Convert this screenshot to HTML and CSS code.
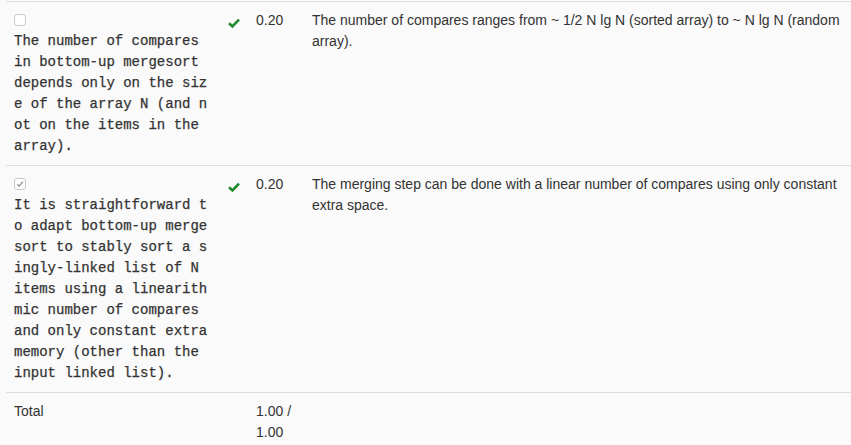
FILE: index.html
```html
<!DOCTYPE html>
<html>
<head>
<meta charset="utf-8">
<link rel="stylesheet" href="styles.css">
</head>
<body>
<div class="wrap">
<table class="grades">
  <colgroup>
    <col class="c-answer">
    <col class="c-check">
    <col class="c-score">
    <col class="c-feedback">
  </colgroup>
  <tbody>
    <tr>
      <td class="answer">
        <span class="box"></span>
        <pre class="code">The number of compares in bottom-up mergesort depends only on the size of the array N (and not on the items in the array).</pre>
      </td>
      <td class="check"><svg class="tick" viewBox="0 0 12 10" width="12" height="10"><path d="M1 5.2 L4.4 8.4 L11 1.6" fill="none" stroke="#1e8a2e" stroke-width="2.6"/></svg></td>
      <td class="score">0.20</td>
      <td class="feedback">The number of compares ranges from ~ 1/2 N lg N (sorted array) to ~ N lg N (random array).</td>
    </tr>
    <tr>
      <td class="answer">
        <span class="box checked"><svg viewBox="0 0 10 10" width="10" height="10"><path d="M2.2 5.2 L4.2 7.2 L7.8 2.6" fill="none" stroke="#999" stroke-width="1.4"/></svg></span>
        <pre class="code">It is straightforward to adapt bottom-up mergesort to stably sort a singly-linked list of N items using a linearithmic number of compares and only constant extra memory (other than the input linked list).</pre>
      </td>
      <td class="check"><svg class="tick" viewBox="0 0 12 10" width="12" height="10"><path d="M1 5.2 L4.4 8.4 L11 1.6" fill="none" stroke="#1e8a2e" stroke-width="2.6"/></svg></td>
      <td class="score">0.20</td>
      <td class="feedback">The merging step can be done with a linear number of compares using only constant extra space.</td>
    </tr>
    <tr>
      <td class="total">Total</td>
      <td class="check"></td>
      <td class="score">1.00 / 1.00</td>
      <td class="feedback"></td>
    </tr>
  </tbody>
</table>
</div>
</body>
</html>
```

FILE: styles.css
```css
html, body {
  margin: 0;
  padding: 0;
  background: #fafafa;
}
body {
  font-family: "Helvetica Neue", "Liberation Sans", Arial, sans-serif;
  font-size: 14px;
  line-height: 21px;
  color: #333;
}
.wrap {
  padding: 0 0 0 6px;
}
.grades {
  width: 845px;
  border-collapse: collapse;
  table-layout: fixed;
  margin-top: 1px;
}
.c-answer { width: 214px; }
.c-check { width: 28px; }
.c-score { width: 56px; }
.grades td {
  border-top: 1px solid #dddddd;
  padding: 8px;
  vertical-align: top;
}
.box {
  display: block;
  box-sizing: border-box;
  width: 12px;
  height: 12px;
  margin: 4px 0 5px 0;
  border: 1px solid #c8c8c8;
  border-radius: 3px;
  background: #fff;
  position: relative;
}
.box svg {
  position: absolute;
  left: 0;
  top: 0;
}
.code {
  margin: 0;
  font-family: "Liberation Mono", "Courier New", monospace;
  font-size: 14px;
  line-height: 21px;
  color: #333;
  white-space: pre-wrap;
  word-break: break-all;
  -webkit-text-stroke: 0.25px #333;
}
.check {
  padding-top: 13px !important;
}
.tick {
  display: block;
  margin-top: 3px;
}
.score {
  color: #333;
}
```
